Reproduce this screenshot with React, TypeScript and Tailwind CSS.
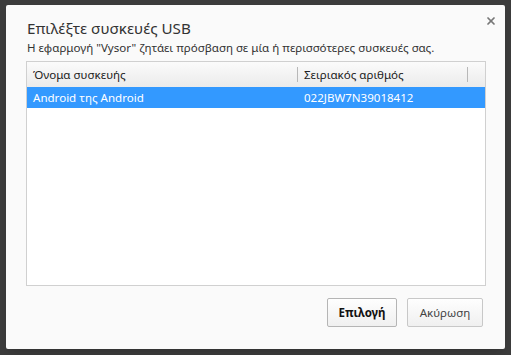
import { X } from "lucide-react";

const font = { fontFamily: '"Noto Sans", "Open Sans", sans-serif' };

export default function App() {
  return (
    <div className="h-[355px] w-[511px] overflow-hidden bg-[#3c3c3c] pl-[6px] pt-[5px]" style={font}>
      <div className="flex h-[344px] w-[499px] flex-col rounded-[2px] bg-[#fafafa] pl-[20px] pr-[19px] pt-[12px] pb-[22px] shadow-lg">
        <div className="flex items-start justify-between pl-[1px]">
          <div>
            <h1 className="text-[15.2px] leading-[22px] text-[#333]">Επιλέξτε συσκευές USB</h1>
            <p className="mt-[1px] text-[11.55px] leading-[16px] text-[#333]">
              Η εφαρμογή "Vysor" ζητάει πρόσβαση σε μία ή περισσότερες συσκευές σας.
            </p>
          </div>
          <button type="button" className="mr-[-11px] mt-[-2px] text-[#777]">
            <X className="h-[12px] w-[12px]" strokeWidth={3.5} />
          </button>
        </div>

        <div className="mt-[5px] h-[225px] w-[460px] border border-[#d0d0d0] bg-white">
          <div className="flex h-[25px] items-center bg-gradient-to-b from-[#fbfbfb] to-[#ebebeb] text-[11.55px] text-[#222]">
            <div className="w-[270px] pl-[6px]">Όνομα συσκευής</div>
            <div className="flex h-[15px] w-[171px] items-center border-l border-r border-[#b8b8b8] pl-[6px]">Σειριακός αριθμός</div>
          </div>
          <div className="flex h-[21px] items-center bg-[#3399ff] text-[11.55px] text-white">
            <div className="w-[270px] pl-[6px]">Android της Android</div>
            <div className="pl-[7px]">022JBW7N39018412</div>
          </div>
        </div>

        <div className="mt-auto flex justify-end gap-[10px] pr-[3px]">
          <button type="button" className="h-[29px] w-[70px] rounded-[2px] border border-[#b5b5b5] bg-gradient-to-b from-[#fefefe] to-[#f0f0f0] text-[11.55px] font-bold text-[#111]">
            Επιλογή
          </button>
          <button type="button" className="h-[29px] w-[76px] rounded-[2px] border border-[#c8c8c8] bg-gradient-to-b from-[#fefefe] to-[#f0f0f0] text-[11.55px] text-[#444]">
            Ακύρωση
          </button>
        </div>
      </div>
    </div>
  );
}
